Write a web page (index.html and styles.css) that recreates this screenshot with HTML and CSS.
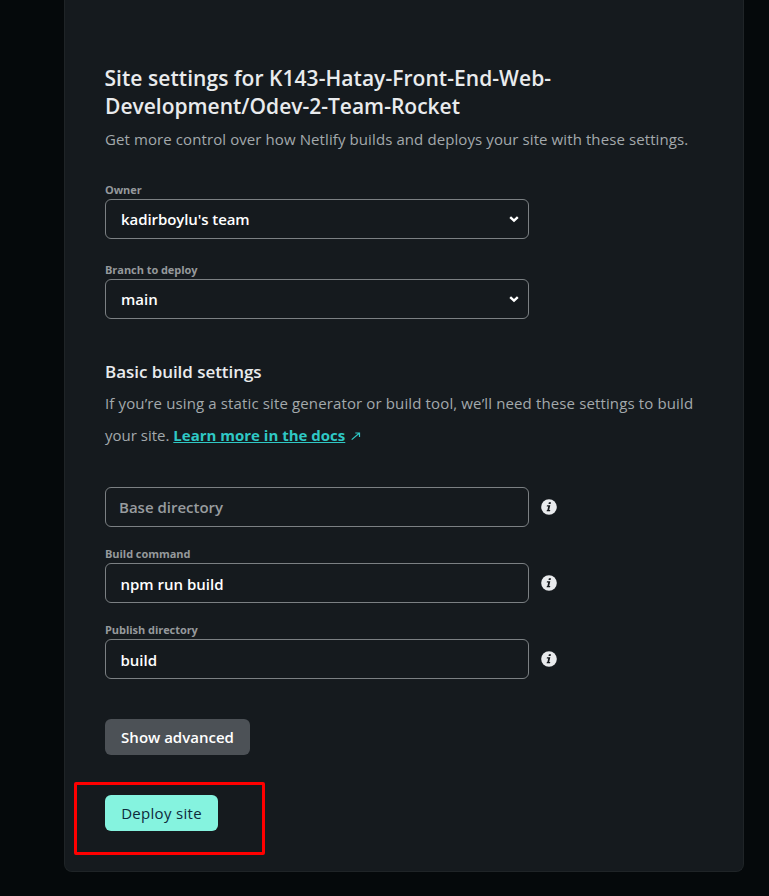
FILE: index.html
```html
<!DOCTYPE html>
<html lang="en">
<head>
<meta charset="utf-8">
<title>Site settings</title>
<link rel="stylesheet" href="styles.css">
</head>
<body>
<main class="card">
  <h1 class="title">Site settings for K143-Hatay-Front-End-Web-<br><span class="title-end">Development/Odev-2-Team-Rocket</span></h1>
  <p class="lead">Get more control over how Netlify builds and deploys your site with these settings.</p>
  <div class="select-field">
    <label class="label">Owner</label>
    <div class="control"><span class="value owner">kadirboylu's team</span><svg class="chevron" width="10" height="8" viewBox="0 0 10 8"><path d="M1.2 2.2 5 5.7 8.8 2.2"/></svg></div>
  </div>
  <div class="select-field second">
    <label class="label">Branch to deploy</label>
    <div class="control"><span class="value">main</span><svg class="chevron" width="10" height="8" viewBox="0 0 10 8"><path d="M1.2 2.2 5 5.7 8.8 2.2"/></svg></div>
  </div>
  <h2 class="subtitle">Basic build settings</h2>
  <p class="help"><span class="help-start">If you’re using a static site generator or build tool, we’ll need these settings to build</span><br><span class="help-end">your site. </span><a class="link">Learn more in the docs</a><svg class="out" width="10" height="10" viewBox="0 0 10 10"><path d="M.7 8.6 8.2 2.2M4.3 2h4.2v4"/></svg></p>
  <div class="row base">
    <div class="control"><span class="placeholder">Base directory</span></div>
    <svg class="info" width="16" height="16" viewBox="0 0 16 16"><circle cx="8" cy="8" r="7.8"/><path d="M7.9 3.2h2.1l-.4 1.9H7.5zM6 6.2h3.3l-1.1 4.7h1.1l-.3 1.3H5.6l.3-1.3h.5l.8-3.4H5.7z"/></svg>
  </div>
  <label class="label">Build command</label>
  <div class="row">
    <div class="control"><span class="value input">npm run build</span></div>
    <svg class="info" width="16" height="16" viewBox="0 0 16 16"><circle cx="8" cy="8" r="7.8"/><path d="M7.9 3.2h2.1l-.4 1.9H7.5zM6 6.2h3.3l-1.1 4.7h1.1l-.3 1.3H5.6l.3-1.3h.5l.8-3.4H5.7z"/></svg>
  </div>
  <label class="label build-label">Publish directory</label>
  <div class="row">
    <div class="control"><span class="value input">build</span></div>
    <svg class="info" width="16" height="16" viewBox="0 0 16 16"><circle cx="8" cy="8" r="7.8"/><path d="M7.9 3.2h2.1l-.4 1.9H7.5zM6 6.2h3.3l-1.1 4.7h1.1l-.3 1.3H5.6l.3-1.3h.5l.8-3.4H5.7z"/></svg>
  </div>
  <button class="btn secondary">Show advanced</button>
  <div class="highlight"><button class="btn primary">Deploy site</button></div>
</main>
</body>
</html>
```
FILE: styles.css
```css
* { box-sizing: border-box; }
body {
  margin: 0;
  height: 896px;
  overflow: hidden;
  background: #05090b;
  font-family: "Open Sans", "Noto Sans", sans-serif;
  color: #e9ebed;
}
.card {
  width: 680px;
  height: 872px;
  margin-left: 64px;
  padding: 64px 40px 0;
  background: #151a1e;
  border: 1px solid #1f2427;
  border-top: 0;
  border-radius: 0 0 8px 8px;
}
h1, h2, p { margin: 0; white-space: nowrap; }
.title { height: 56px; font-size: 21px; line-height: 28px; font-weight: 600; letter-spacing: 0.05px; text-indent: -0.5px; }
.title-end { letter-spacing: 0; }
.lead { margin-top: 7px; font-size: 15px; line-height: 24px; color: #a3a9ac; letter-spacing: 0.095px; }
.label {
  display: block;
  height: 20px;
  padding-top: 1px;
  font-size: 11px;
  line-height: 20px;
  font-weight: 700;
  letter-spacing: -0.05px;
  color: #95999c;
}
.select-field { margin-top: 28px; }
.second { margin-top: 20px; }
.control {
  display: flex;
  align-items: center;
  justify-content: space-between;
  width: 424px;
  height: 40px;
  padding: 0 9px 0 15px;
  border: 1px solid #7b8083;
  border-radius: 6px;
  font-size: 15px;
  font-weight: 600;
}
.value { color: #fff; }
.owner { letter-spacing: -0.08px; }
.input { margin-left: -0.5px; padding-top: 2px; }
.placeholder { margin-left: -2px; color: #989c9f; }
.chevron { fill: none; stroke: #fff; stroke-width: 2.4; }
.subtitle { margin-top: 41px; font-size: 17px; line-height: 24px; font-weight: 600; letter-spacing: -0.05px; }
.help { margin-top: 3px; font-size: 15px; line-height: 32px; color: #a3a9ac; }
.help-start { letter-spacing: 0.13px; }
.help-end { white-space: pre; }
.link { color: #2fc8c5; font-weight: 700; text-decoration: underline; }
.out { margin-left: 6px; fill: none; stroke: #2fc8c5; stroke-width: 1.2; }
.row { display: flex; align-items: center; gap: 12px; }
.base { margin-top: 36px; margin-bottom: 16px; }
.build-label { margin-top: 16px; }
.info circle { fill: #e9ebed; }
.info path { fill: #15191d; }
.btn {
  display: block;
  height: 36px;
  padding: 0;
  border: 0;
  border-radius: 6px;
  font-family: inherit;
  font-size: 15px;
}
.secondary { width: 145px; margin-top: 40px; background: #4c5156; color: #fff; font-weight: 600; }
.highlight {
  width: 191px;
  height: 73px;
  margin: 27px 0 0 -31px;
  padding: 10px 0 0 28px;
  border: 3px solid #ff0000;
  border-radius: 2px;
}
.primary { width: 113px; background: #85f3df; color: #0e2a3b; font-weight: 500; letter-spacing: 0.3px; }
```
